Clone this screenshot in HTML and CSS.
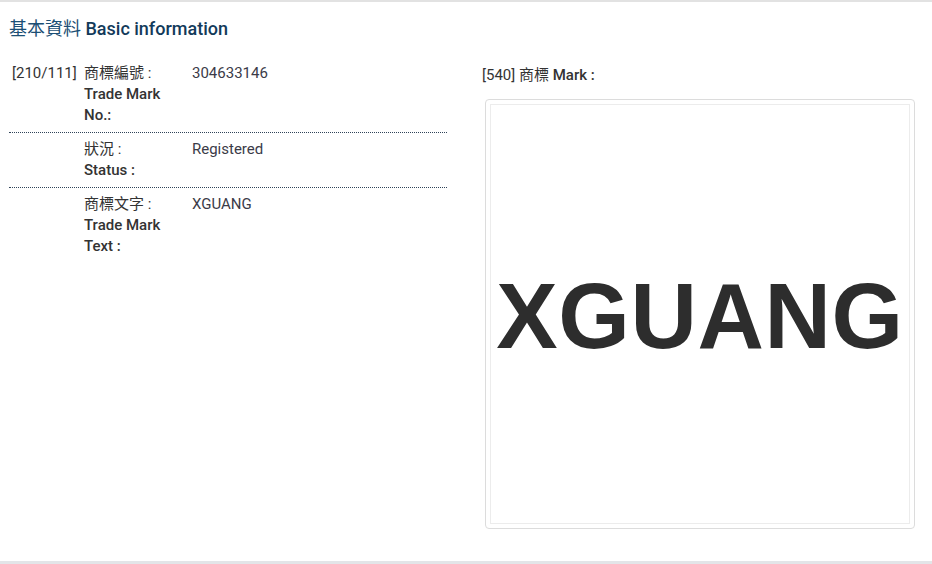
FILE: index.html
```html
<!DOCTYPE html>
<html lang="zh-Hant">
<head>
<meta charset="utf-8">
<title>基本資料 Basic information</title>
<link rel="stylesheet" href="styles.css">
</head>
<body>
<div class="panel">
  <h2 class="title"><span class="zh">基本資料</span> Basic information</h2>
  <div class="cols">
    <div class="left">
      <div class="row">
        <div class="code">[210/111]</div>
        <div class="label"><div>商標編號 :</div><div class="en">Trade Mark No.:</div></div>
        <div class="value">304633146</div>
      </div>
      <div class="row">
        <div class="code"></div>
        <div class="label"><div>狀況 :</div><div class="en">Status :</div></div>
        <div class="value">Registered</div>
      </div>
      <div class="row last">
        <div class="code"></div>
        <div class="label"><div>商標文字 :</div><div class="en">Trade Mark Text :</div></div>
        <div class="value">XGUANG</div>
      </div>
    </div>
    <div class="right">
      <div class="mark-label">[540] 商標 <span class="en">Mark :</span></div>
      <div class="thumb">
        <div class="thumb-inner"><span class="mark">XGUANG</span></div>
      </div>
    </div>
  </div>
</div>
</body>
</html>
```

FILE: styles.css
```css
html, body {
  margin: 0;
  padding: 0;
  background: #fff;
}
body {
  font-family: Roboto, "Noto Sans CJK TC", sans-serif;
  font-size: 15px;
  color: #333;
}
.panel {
  border-top: 2px solid #e2e2e2;
  border-bottom: 3px solid #e3e5e8;
  height: 564px;
  box-sizing: border-box;
}
.title {
  margin: 0;
  padding: 16px 0 0 9px;
  font-size: 18px;
  font-weight: 500;
  line-height: 22px;
  color: #123a5a;
}
.title .zh {
  font-weight: 400;
  color: #1c4f75;
}
.cols {
  display: flex;
  margin-top: 17px;
}
.left {
  width: 438px;
  margin-left: 9px;
}
.row {
  display: flex;
  padding: 6px 0 6px;
  border-bottom: 1px dotted #2f4358;
  line-height: 21px;
}
.row.last {
  border-bottom: none;
}
.code {
  width: 72px;
  padding-left: 3px;
  flex: none;
}
.label {
  width: 108px;
  flex: none;
}
.label .en {
  font-weight: 500;
  width: 94px;
}
.value {
  color: #3b3b48;
}
.right {
  margin-left: 35px;
  width: 434px;
}
.mark-label {
  line-height: 21px;
  padding-top: 8px;
}
.mark-label .en {
  font-weight: 500;
}
.thumb {
  margin: 13px 0 0 3px;
  width: 430px;
  height: 430px;
  box-sizing: border-box;
  border: 1px solid #dcdcdc;
  border-radius: 4px;
  padding: 4px;
}
.thumb-inner {
  height: 100%;
  box-sizing: border-box;
  border: 1px solid #ececec;
  display: flex;
  align-items: center;
  justify-content: center;
}
.mark {
  font-family: "Liberation Sans", Arial, sans-serif;
  font-weight: bold;
  font-size: 92px;
  letter-spacing: 0.6px;
  color: #2d2d2d;
  line-height: 1;
  padding-top: 4px;
}
```
